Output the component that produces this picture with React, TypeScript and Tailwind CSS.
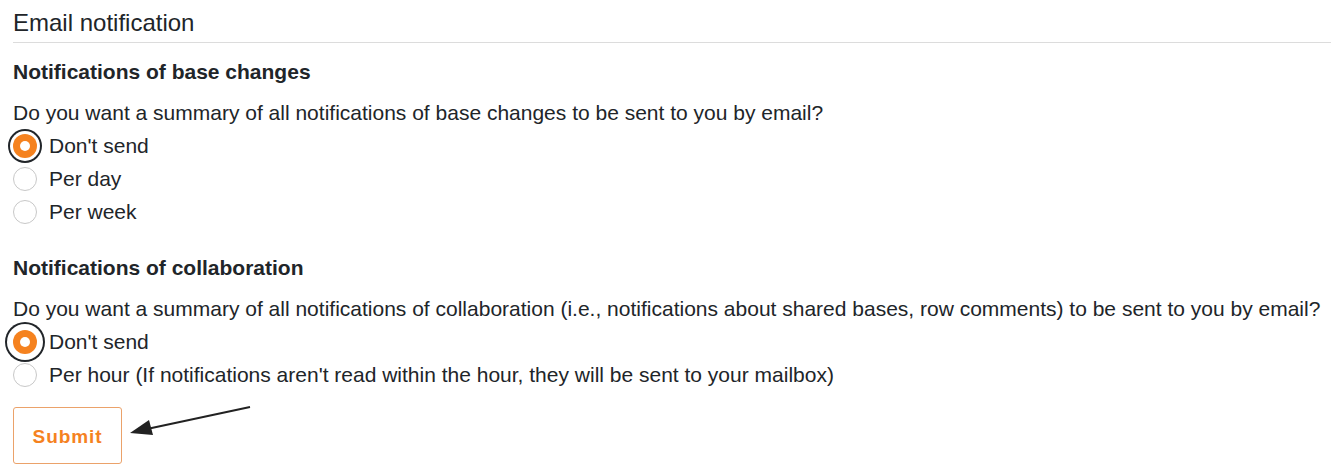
const font = { fontFamily: '"Liberation Sans", Arial, sans-serif' };

type Opt = { label: string; checked?: boolean; big?: boolean };

const Radio = ({ label, checked, big }: Opt) => (
  <label className="flex items-center h-[33px] gap-3 cursor-pointer">
    {checked ? (
      <span
        className={
          'w-6 h-6 rounded-full bg-[#f5821f] flex items-center justify-center shrink-0 ' +
          (big
            ? 'shadow-[0_0_0_6px_white,0_0_0_8px_#212529]'
            : 'shadow-[0_0_0_3px_white,0_0_0_5px_#212529]')
        }
      >
        <span className="w-[10px] h-[10px] rounded-full bg-white" />
      </span>
    ) : (
      <span className="w-6 h-6 rounded-full border border-[#c8c8c8] bg-white shrink-0" />
    )}
    <span className="text-[21px] leading-none text-[#212529]">{label}</span>
  </label>
);

export default function App() {
  return (
    <div className="relative bg-white min-h-screen pl-[13px] text-[#212529]" style={font}>
      <h3 className="text-[24px] leading-[29px] pt-[8px] pb-[5px] border-b border-[#dcdcdc] font-normal">
        Email notification
      </h3>

      {/* base changes */}
      <h4 className="text-[21px] font-bold leading-[24px] mt-[17px]">Notifications of base changes</h4>
      <p className="text-[21px] leading-[24px] mt-[17px]">
        Do you want a summary of all notifications of base changes to be sent to you by email?
      </p>
      <div className="mt-[4px]">
        <Radio label="Don't send" checked />
        <Radio label="Per day" />
        <Radio label="Per week" />
      </div>

      {/* collaboration */}
      <h4 className="text-[21px] font-bold leading-[24px] mt-[28px]">Notifications of collaboration</h4>
      <p className="text-[21px] leading-[24px] mt-[17px]">
        Do you want a summary of all notifications of collaboration (i.e., notifications about shared bases, row
        comments) to be sent to you by email?
      </p>
      <div className="mt-[4px]">
        <Radio label="Don't send" checked big />
        <Radio label="Per hour (If notifications aren't read within the hour, they will be sent to your mailbox)" />
      </div>

      <button className="mt-[16px] w-[109px] h-[57px] pt-[3px] border border-[#eba26a] rounded-[3px] text-[#f5821f] text-[19px] font-bold tracking-[0.9px]">
        Submit
      </button>

      {/* annotation arrow */}
      <svg className="absolute left-[125px] top-[400px]" width="132" height="40" viewBox="0 0 132 40">
        <line x1="125" y1="7" x2="22" y2="29" stroke="#222" strokeWidth="2" />
        <polygon points="5,33 24,20 28,35" fill="#222" />
      </svg>
    </div>
  );
}
